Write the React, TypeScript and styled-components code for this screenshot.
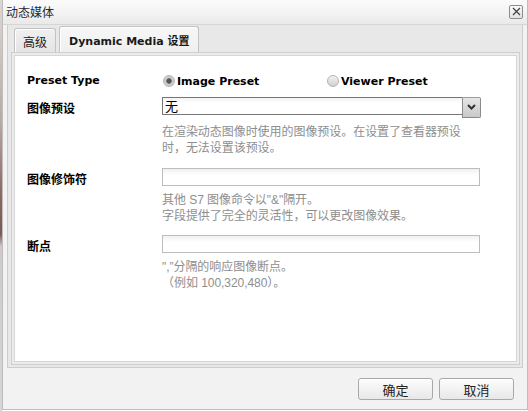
import styled, { createGlobalStyle } from 'styled-components';

const GlobalStyle = createGlobalStyle`
    html, body, #root {
        margin: 0;
        height: 100%;
    }
    body {
        background: linear-gradient(to bottom, #dcd8d4 0%, #b8a8a0 30%, #8a6660 48%, #7c5a54 57%, #cfcac8 60%, #d6d6d6 100%) no-repeat 0 0 / 2px 100%, #fff;
        font-family: "Noto Sans CJK SC", sans-serif;
        -webkit-font-smoothing: antialiased;
    }
`;

const LATIN = `"DejaVu Sans", "Noto Sans CJK SC", sans-serif`;
const CJK = `"Noto Sans CJK SC", sans-serif`;
const HINT = `"Liberation Sans", "Noto Sans CJK SC", sans-serif`;

function App() {
    return (
        <>
            <GlobalStyle />
            <Dialog>
                <TitleBar>
                    <span>动态媒体</span>
                    <CloseButton aria-label="close">
                        <svg width="9" height="9" viewBox="0 0 9 9">
                            <path d="M1 1 L8 8 M8 1 L1 8" stroke="#444" strokeWidth="1.3" fill="none" />
                        </svg>
                    </CloseButton>
                </TitleBar>
                <Body>
                    <TabPanel>
                        <TabStrip>
                            <Tab>高级</Tab>
                            <Tab $active>Dynamic Media 设置</Tab>
                        </TabStrip>
                        <Content>
                            <Row $gap={0}>
                                <Label $latin>Preset Type</Label>
                                <Radios>
                                    <RadioItem>
                                        <Radio $checked />
                                        Image Preset
                                    </RadioItem>
                                    <RadioItem>
                                        <Radio />
                                        Viewer Preset
                                    </RadioItem>
                                </Radios>
                            </Row>
                            <Row $gap={6}>
                                <Label>图像预设</Label>
                                <Field>
                                    <Select>
                                        <SelectValue>无</SelectValue>
                                        <SelectButton>
                                            <svg width="9" height="6" viewBox="0 0 9 6">
                                                <path d="M1 1 L4.5 4.5 L8 1" stroke="#333" strokeWidth="2" fill="none" />
                                            </svg>
                                        </SelectButton>
                                    </Select>
                                    <Hint>在渲染动态图像时使用的图像预设。在设置了查看器预设<br />时，无法设置该预设。</Hint>
                                </Field>
                            </Row>
                            <Row $gap={12}>
                                <Label>图像修饰符</Label>
                                <Field>
                                    <TextInput />
                                    <Hint>其他 S7 图像命令以"&"隔开。<br />字段提供了完全的灵活性，可以更改图像效果。</Hint>
                                </Field>
                            </Row>
                            <Row $gap={11}>
                                <Label>断点</Label>
                                <Field>
                                    <TextInput />
                                    <Hint>",”分隔的响应图像断点。<br />（例如 100,320,480）。</Hint>
                                </Field>
                            </Row>
                        </Content>
                    </TabPanel>
                    <Footer>
                        <Button>确定</Button>
                        <Button>取消</Button>
                    </Footer>
                </Body>
            </Dialog>
        </>
    );
}

export default App;

const Dialog = styled.div`
    margin-left: 2px;
    width: 526px;
    height: 410px;
    box-sizing: border-box;
    border: 1px solid #bdbdbd;
    border-top: none;
    background: #f2f2f2;
    display: flex;
    flex-direction: column;
`;

const TitleBar = styled.div`
    height: 24px;
    flex: none;
    display: flex;
    align-items: center;
    justify-content: space-between;
    padding: 0 4px 0 3px;
    background: linear-gradient(to bottom, #fbfbfb 0%, #f3f3f3 55%, #e9e9e9 100%);
    border-bottom: 1px solid #d6d6d6;
    > span {
        font-family: ${CJK};
        font-size: 12px;
        line-height: 14px;
        color: #2a2a2a;
        margin-top: -1px;
    }
`;

const CloseButton = styled.div`
    width: 12px;
    height: 12px;
    margin-top: -1px;
    border: 1px solid #8c8c8c;
    border-radius: 2px;
    background: linear-gradient(to bottom, #fafafa, #e2e2e2);
    display: flex;
    align-items: center;
    justify-content: center;
`;

const Body = styled.div`
    flex: 1;
    display: flex;
    flex-direction: column;
    padding: 0 4px;
`;

const TabPanel = styled.div`
    height: 343px;
    box-sizing: border-box;
    border: 1px solid #cdcdcd;
    border-top: none;
    background: #e8e8e8;
    padding: 0 2px 2px 3px;
    display: flex;
    flex-direction: column;
`;

const TabStrip = styled.div`
    height: 27px;
    flex: none;
    display: flex;
    align-items: flex-end;
    gap: 3px;
    padding-left: 3px;
`;

const Tab = styled.div<{ $active?: boolean }>`
    height: ${p => (p.$active ? 26 : 24)}px;
    box-sizing: border-box;
    display: flex;
    align-items: center;
    padding: ${p => (p.$active ? '1px 9px 0 9px' : '1px 8px 0 8px')};
    border: 1px solid #c2c2c2;
    border-bottom: none;
    border-radius: 3px 3px 0 0;
    background: ${p => (p.$active
        ? 'linear-gradient(to bottom, #f7f7f7, #efefef)'
        : 'linear-gradient(to bottom, #f0f0f0, #e4e4e4)')};
    box-shadow: inset 1px 1px 0 #fff;
    font-family: ${p => (p.$active ? LATIN : CJK)};
    font-weight: ${p => (p.$active ? 700 : 400)};
    font-size: ${p => (p.$active ? 11 : 12)}px;
    color: #1a1a1a;
    white-space: nowrap;
`;

const Content = styled.div`
    flex: 1;
    border: 1px solid #cfcfcf;
    background: #fff;
    box-shadow: inset 0 0 0 2px #ececec, inset 0 0 0 3px #d6d6d6;
    padding: 18px 0 0 15px;
    display: flex;
    flex-direction: column;
`;

const Row = styled.div<{ $gap: number }>`
    display: grid;
    grid-template-columns: 135px 319px;
    align-items: start;
    margin-top: ${p => p.$gap}px;
`;

const Label = styled.div<{ $latin?: boolean }>`
    font-family: ${p => (p.$latin ? LATIN : CJK)};
    font-weight: 700;
    font-size: ${p => (p.$latin ? 11 : 12)}px;
    line-height: 20px;
    padding-top: ${p => (p.$latin ? 0 : 1)}px;
    color: #000;
`;

const Radios = styled.div`
    display: grid;
    grid-template-columns: 164px auto;
    height: 20px;
    align-items: center;
`;

const RadioItem = styled.label`
    display: flex;
    align-items: center;
    gap: 2px;
    font-family: ${LATIN};
    font-weight: 700;
    font-size: 11px;
    color: #000;
`;

const Radio = styled.span<{ $checked?: boolean }>`
    width: 12px;
    height: 12px;
    box-sizing: border-box;
    margin-left: 1px;
    border-radius: 50%;
    border: 1px solid #b4b4b4;
    background: ${p => (p.$checked
        ? 'radial-gradient(circle, #555 0, #555 2.3px, #c4c4c4 3px, #dcdcdc 100%)'
        : 'linear-gradient(to bottom, #f2f2f2, #cfcfcf)')};
`;

const Field = styled.div`
    display: flex;
    flex-direction: column;
`;

const Select = styled.div`
    display: flex;
    align-items: flex-start;
    height: 21px;
`;

const SelectValue = styled.div`
    width: 300px;
    height: 18px;
    box-sizing: border-box;
    border: 1px solid #767676;
    border-right: none;
    background: linear-gradient(to bottom, #f3f3f3 0, #fff 5px);
    font-family: ${CJK};
    font-size: 13px;
    line-height: 16px;
    padding-left: 2px;
    color: #000;
`;

const SelectButton = styled.div`
    width: 19px;
    height: 21px;
    box-sizing: border-box;
    border: 1px solid #8a8a8a;
    border-top-color: #9a9a9a;
    border-radius: 0 2px 2px 0;
    background: linear-gradient(to bottom, #e6e6e6, #c9c9c9);
    display: flex;
    align-items: center;
    justify-content: center;
    padding-bottom: 2px;
`;

const TextInput = styled.div`
    width: 318px;
    height: 18px;
    box-sizing: border-box;
    border: 1px solid #bdbdbd;
    background: linear-gradient(to bottom, #f0f0f0 0, #fff 6px);
`;

const Hint = styled.div`
    margin-top: 6px;
    font-family: ${HINT};
    font-size: 12px;
    line-height: 16px;
    letter-spacing: -0.05px;
    color: #8e8e8e;
    white-space: nowrap;
`;

const Footer = styled.div`
    flex: 1;
    display: flex;
    justify-content: flex-end;
    align-items: flex-start;
    gap: 6px;
    padding: 10px 9px 0 0;
`;

const Button = styled.div`
    width: 75px;
    height: 22px;
    box-sizing: border-box;
    border: 1px solid #a8a8a8;
    border-radius: 3px;
    background: linear-gradient(to bottom, #fdfdfd, #e8e8e8);
    box-shadow: inset 0 1px 0 #fff;
    display: flex;
    align-items: center;
    justify-content: center;
    font-family: ${CJK};
    font-size: 13px;
    color: #222;
`;
